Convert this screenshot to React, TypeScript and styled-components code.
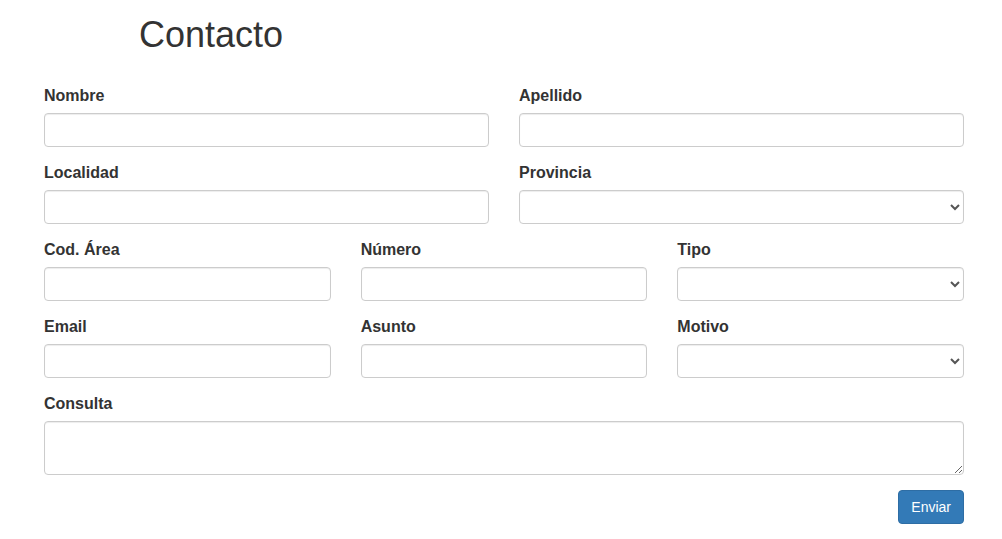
import React from "react";
import styled, { createGlobalStyle } from "styled-components";

const Global = createGlobalStyle`
  html, body { margin: 0; padding: 0; background: #fff; }
  body {
    font-family: "Liberation Sans", Arial, Helvetica, sans-serif;
    font-size: 14px;
    line-height: 1.42857143;
    color: #333;
  }
  * { box-sizing: border-box; }
`;

const Page = styled.div`
  width: 1002px;
  padding: 0 38px 0 44px;
`;

const Title = styled.h1`
  margin: 15px 0 30px 95px;
  font-size: 36px;
  font-weight: 500;
  line-height: 1.1;
  color: #333;
`;

const Row = styled.div<{ $cols: number }>`
  display: grid;
  grid-template-columns: repeat(${(p) => p.$cols}, 1fr);
  column-gap: 30px;
`;

const Group = styled.div`
  margin-bottom: 15px;
`;

const Label = styled.label`
  display: block;
  padding-top: 1px;
  margin-bottom: 7px;
  font-size: 16px;
  line-height: 20px;
  font-weight: bold;
  color: #333;
`;

const fieldCss = `
  display: block;
  width: 100%;
  height: 34px;
  padding: 6px 12px;
  font-family: inherit;
  font-size: 14px;
  line-height: 1.42857143;
  color: #555;
  background-color: #fff;
  border: 1px solid #ccc;
  border-radius: 4px;
  box-shadow: inset 0 1px 1px rgba(0, 0, 0, 0.075);
  margin: 0;
`;

const Input = styled.input`
  ${fieldCss}
`;

const Select = styled.select`
  ${fieldCss}
  padding: 6px 8px;
`;

const TextArea = styled.textarea`
  ${fieldCss}
  height: 54px;
  resize: vertical;
`;

const Actions = styled.div`
  display: flex;
  justify-content: flex-end;
`;

const Button = styled.button`
  display: inline-block;
  height: 34px;
  padding: 6px 12px;
  font-family: inherit;
  font-size: 14px;
  line-height: 1.42857143;
  color: #fff;
  background-color: #337ab7;
  border: 1px solid #2e6da4;
  border-radius: 4px;
  cursor: pointer;
`;

type F = { label: string; kind?: "input" | "select" };

const Field = ({ label, kind = "input" }: F) => (
  <Group>
    <Label>{label}</Label>
    {kind === "select" ? (
      <Select>
        <option></option>
      </Select>
    ) : (
      <Input type="text" />
    )}
  </Group>
);

export default function App() {
  return (
    <>
      <Global />
      <Page>
        <Title>Contacto</Title>
        <form onSubmit={(e) => e.preventDefault()}>
          <Row $cols={2}>
            <Field label="Nombre" />
            <Field label="Apellido" />
          </Row>
          <Row $cols={2}>
            <Field label="Localidad" />
            <Field label="Provincia" kind="select" />
          </Row>
          <Row $cols={3}>
            <Field label="Cod. Área" />
            <Field label="Número" />
            <Field label="Tipo" kind="select" />
          </Row>
          <Row $cols={3}>
            <Field label="Email" />
            <Field label="Asunto" />
            <Field label="Motivo" kind="select" />
          </Row>
          <Group>
            <Label>Consulta</Label>
            <TextArea rows={2} />
          </Group>
          <Actions>
            <Button type="submit">Enviar</Button>
          </Actions>
        </form>
      </Page>
    </>
  );
}
